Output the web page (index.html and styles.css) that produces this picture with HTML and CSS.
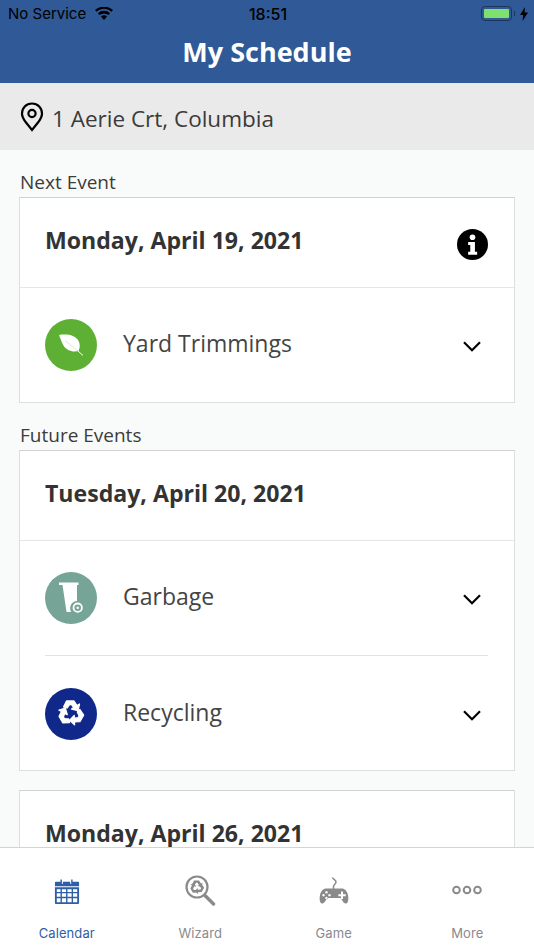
FILE: index.html
```html
<!DOCTYPE html>
<html lang="en">
<head>
<meta charset="utf-8">
<title>My Schedule</title>
<link rel="stylesheet" href="styles.css">
</head>
<body>
<div class="app">
  <header class="header">
    <div class="status">
      <div class="status-left">
        <span>No Service</span>
        <svg class="wifi" viewBox="0 0 18 13"><path d="M9 13 6 9.6a4.4 4.4 0 0 1 6 0ZM4.6 8.1 2.9 6.2a9 9 0 0 1 12.2 0L13.4 8.100a6.500 6.500 0 0 0-8.800 0ZM1.500 4.800 0 3.100a13.300 13.300 0 0 1 18 0L16.500 4.800a11 11 0 0 0-15 0Z"/></svg>
      </div>
      <div class="status-time">18:51</div>
      <div class="status-right">
        <span class="battery"><span class="battery-fill"></span></span>
        <span class="battery-nub"></span>
        <svg class="bolt" viewBox="0 0 8 14"><path d="M5 0 0 8h3.200L2.500 14 8 5.600H4.600Z"/></svg>
      </div>
    </div>
    <h1 class="title">My Schedule</h1>
  </header>
  <div class="address">
    <svg class="pin" viewBox="0 0 24 30"><path d="M12 1.500C6 1.500 2 6 2 11.500c0 4 2 6.500 4 9l6 7.500 6-7.500c2-2.500 4-5 4-9C22 6 18 1.500 12 1.500Z" fill="none" stroke="#000" stroke-width="2.200"/><circle cx="12" cy="11.500" r="3.600" fill="none" stroke="#000" stroke-width="2.200"/></svg>
    <span>1 Aerie Crt, Columbia</span>
  </div>
  <main class="content">
    <div class="section-label">Next Event</div>
    <section class="card">
      <div class="date-row">
        <h2 class="date">Monday, April 19, 2021</h2>
        <svg class="info" viewBox="0 0 32 32"><circle cx="16" cy="16" r="16" fill="#000"/><circle cx="16" cy="8.500" r="2.900" fill="#fff"/><path d="M11.500 13.500h7v10h2.300v3H11.500v-3h2.200v-7h-2.200Z" fill="#fff"/></svg>
      </div>
      <div class="event">
        <svg class="badge" viewBox="0 0 52 52"><circle cx="26" cy="26" r="26" fill="#5eb034"/><path d="M14 16c9-1.500 16 .5 19 5 2.500 4 2 8 .5 11-6 1.500-12-.5-15-5.500-2-3.500-3-7-4.500-10.500Z" fill="#fff"/><path d="M20 21.500 33 32" stroke="#cfe8c2" stroke-width=".8"/><path d="M33 32l5 4.500" stroke="#fff" stroke-width="1"/></svg>
        <span class="event-name">Yard Trimmings</span>
        <svg class="chevron" viewBox="0 0 18 11"><path d="M1 1.200 9 9.200l8-8" fill="none" stroke="#000" stroke-width="2.200"/></svg>
      </div>
    </section>
    <div class="section-label">Future Events</div>
    <section class="card">
      <div class="date-row">
        <h2 class="date">Tuesday, April 20, 2021</h2>
      </div>
      <div class="event">
        <svg class="badge" viewBox="0 0 52 52"><circle cx="26" cy="26" r="26" fill="#76a497"/><path d="M14 10.500h19.500V13H32v16a7.200 7.200 0 0 0-5.800 11H21.500L17.500 13H14Z" fill="#fff"/><circle cx="32.700" cy="35.700" r="4.200" fill="none" stroke="#fff" stroke-width="1.800"/><circle cx="32.700" cy="35.700" r="1.300" fill="#fff"/></svg>
        <span class="event-name">Garbage</span>
        <svg class="chevron" viewBox="0 0 18 11"><path d="M1 1.200 9 9.200l8-8" fill="none" stroke="#000" stroke-width="2.200"/></svg>
      </div>
      <div class="event event-sub">
        <svg class="badge" viewBox="0 0 52 52"><circle cx="26" cy="26" r="26" fill="#10288a"/><g fill="#fff" stroke="#fff" stroke-width="1.300" stroke-linejoin="round"><path d="M18.500 19 21.500 13H29L32 17.500 34.500 16 33 22.500 26.500 21 28.800 19.500 26.500 16.500H24.500L22 20Z"/><path d="M18.500 19 21.500 13H29L32 17.500 34.500 16 33 22.500 26.500 21 28.800 19.500 26.500 16.500H24.500L22 20Z" transform="rotate(120 26 25)"/><path d="M18.500 19 21.500 13H29L32 17.500 34.500 16 33 22.500 26.500 21 28.800 19.500 26.500 16.500H24.500L22 20Z" transform="rotate(240 26 25)"/></g></svg>
        <span class="event-name">Recycling</span>
        <svg class="chevron" viewBox="0 0 18 11"><path d="M1 1.200 9 9.200l8-8" fill="none" stroke="#000" stroke-width="2.200"/></svg>
      </div>
    </section>
    <section class="card card-next">
      <div class="date-row">
        <h2 class="date">Monday, April 26, 2021</h2>
      </div>
    </section>
  </main>
  <nav class="tabbar">
    <div class="tab tab-active">
      <div class="tab-box">
        <svg class="icon-calendar" viewBox="0 0 28 30" fill="#2f5ea8"><path d="M2 5h5V2.500h1.500v5h1V5h8v2.500h1v-5H20V5h6a1 1 0 0 1 1 1v4H1V6a1 1 0 0 1 1-1Z"/><path fill-rule="evenodd" d="M1 11h26v17a1 1 0 0 1-1 1H2a1 1 0 0 1-1-1ZM3 13v3h4v-3Zm5.500 0v3h4.500v-3Zm6 0v3H19v-3Zm6 0v3H25v-3ZM3 17.500v3.700h4v-3.700Zm5.500 0v3.700h4.500v-3.700Zm6 0v3.700H19v-3.700Zm6 0v3.700H25v-3.700ZM3 22.700V27h4v-4.300Zm5.500 0V27h4.500v-4.300Zm6 0V27H19v-4.300Zm6 0V27H25v-4.300Z"/></svg>
      </div>
      <span>Calendar</span>
    </div>
    <div class="tab">
      <div class="tab-box">
        <svg class="icon-wizard" viewBox="0 0 32 32"><circle cx="13" cy="13" r="10.500" fill="none" stroke="#8a8a8c" stroke-width="2.200"/><path d="M21.500 22 29.500 30" stroke="#8a8a8c" stroke-width="3.400" stroke-linecap="round"/><g fill="#8a8a8c"><path d="M8 10.500 10 6.500H15L17 9.500 18.500 8.700 17.700 13 13.500 12 15 11 13.500 8.800H12L10.400 11.600Z"/><path d="M8 10.500 10 6.500H15L17 9.500 18.500 8.700 17.700 13 13.500 12 15 11 13.500 8.800H12L10.400 11.600Z" transform="rotate(120 13 13)"/><path d="M8 10.500 10 6.500H15L17 9.500 18.500 8.700 17.700 13 13.500 12 15 11 13.500 8.800H12L10.400 11.600Z" transform="rotate(240 13 13)"/></g></svg>
      </div>
      <span>Wizard</span>
    </div>
    <div class="tab">
      <div class="tab-box">
        <svg class="icon-game" viewBox="0 0 30 30"><path d="M14.500 13V10.500c0-2 2.500-2 2.500-4.500S13.500 3.500 13.500 1.500" fill="none" stroke="#8a8a8c" stroke-width="1.500"/><path fill="#8a8a8c" fill-rule="evenodd" d="M7.500 12.500h15c3.500 0 5.500 2.500 6.500 6.500.7 3.500.5 8-2 8.500-2.700.3-3.800-4-5.500-5.500H8.500C6.800 23.500 5.700 27.800 3 27.500c-2.500-.5-2.700-5-2-8.500 1-4 3-6.500 6.500-6.500ZM22 15.500v2.700h-2.700v2H22v2.700h2v-2.700h2.700v-2H24v-2.700ZM7.500 15a1.300 1.300 0 1 0 .01 0Zm-3 2.900a1.300 1.300 0 1 0 .01 0Zm6 0a1.300 1.300 0 1 0 .01 0Zm-3 2.900a1.300 1.300 0 1 0 .01 0Z"/></svg>
      </div>
      <span>Game</span>
    </div>
    <div class="tab">
      <div class="tab-box">
        <svg class="icon-more" viewBox="0 0 30 10"><g fill="none" stroke="#8a8a8c" stroke-width="2"><circle cx="4.500" cy="5" r="3.300"/><circle cx="15" cy="5" r="3.300"/><circle cx="25.500" cy="5" r="3.300"/></g></svg>
      </div>
      <span>More</span>
    </div>
  </nav>
</div>
</body>
</html>
```
FILE: styles.css
```css
* { box-sizing: border-box; }
html, body { margin: 0; padding: 0; }
body { width: 534px; height: 950px; overflow: hidden; font-family: "Open Sans", sans-serif; color: #333; }
.app { display: flex; flex-direction: column; width: 534px; height: 950px; background: #f9fbfa; }

.header { height: 83px; flex: none; background: #2f5997; }
.status { position: relative; display: flex; justify-content: space-between; align-items: center; height: 27px; padding: 0 6px 0 8px; font-family: Inter, "Liberation Sans", sans-serif; font-size: 15px; color: #000; }
.status-left { display: flex; align-items: center; gap: 9px; }
.wifi { width: 18px; height: 13px; fill: #000; }
.status-time { position: absolute; left: 2px; right: 0; text-align: center; font-size: 16px; font-weight: 500; }
.status-right { display: flex; align-items: center; }
.battery { display: block; width: 31px; height: 15px; padding: 2px; border: 1.500px solid #1d3557; border-radius: 4px; }
.battery-fill { display: block; height: 100%; background: #7de06f; border-radius: 1px; }
.battery-nub { width: 1.500px; height: 5px; margin: 0 5px 0 2px; background: #1d3557; }
.bolt { width: 8px; height: 14px; fill: #000; }
.title { margin: 7px 0 0; text-align: center; font-size: 27px; font-weight: 700; line-height: 36px; color: #fff; }

.address { height: 67px; flex: none; display: flex; align-items: center; gap: 8px; padding-left: 20px; background: #eaeaea; font-size: 22.500px; color: #3a3a3a; }
.address span { margin-top: 4px; }
.pin { width: 24px; height: 30px; }

.content { flex: 1; min-height: 0; overflow: hidden; padding: 0 19px; }
.section-label { height: 47px; padding-top: 19px; padding-left: 1px; font-size: 19px; line-height: 26px; color: #3c3c3c; }
.card { background: #fff; border: 1px solid #dedede; border-top-color: #d2d2d2; }
.card-next { margin-top: 19px; }
.date-row { display: flex; align-items: center; justify-content: space-between; height: 90px; padding: 0 26px 0 25px; border-bottom: 1px solid #e6e6e6; }
.date { margin: 0 0 6px; font-size: 23.100px; font-weight: 700; color: #333; }
.info { width: 31px; height: 31px; margin-top: 4px; }
.event { display: flex; align-items: center; height: 114px; padding: 0 26px 0 25px; }
.event-sub { height: 115px; padding-top: 3px; position: relative; }
.event-sub::before { content: ""; position: absolute; left: 25px; right: 26px; top: 0; height: 1px; background: #e2e2e2; }
.badge { width: 52px; height: 52px; flex: none; margin-bottom: 1px; }
.event-name { flex: 1; margin: 0 0 5px 26px; font-size: 23px; color: #444; }
.chevron { width: 18px; height: 11px; margin-right: 7px; margin-top: 3px; }

.tabbar { flex: none; height: 103px; display: grid; grid-template-columns: repeat(4, 1fr); background: #fff; border-top: 1px solid #d4d4d4; }
.tab { display: flex; flex-direction: column; align-items: center; padding-top: 26px; font-family: Inter, "Liberation Sans", sans-serif; font-size: 13px; line-height: 16px; letter-spacing: .1px; color: #8a8a8c; }
.tab-box { display: flex; align-items: center; justify-content: center; height: 32px; margin-bottom: 19px; }
.tab-active { color: #2f5ea8; }
.icon-calendar { width: 26px; height: 28px; margin-top: 2px; }
.icon-wizard { width: 32px; height: 32px; margin-left: 0; margin-top: -1px; }
.icon-game { width: 30px; height: 30px; margin-top: 1px; }
.icon-more { width: 30px; height: 10px; margin-top: -1px; }
```
